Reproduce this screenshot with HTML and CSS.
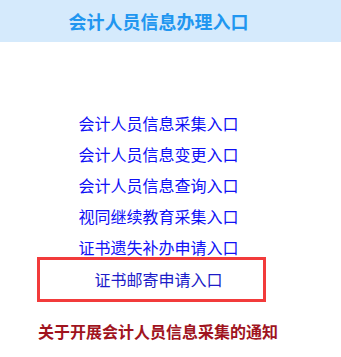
FILE: index.html
```html
<!DOCTYPE html>
<html lang="zh-CN">
<head>
<meta charset="utf-8">
<title>会计人员信息办理入口</title>
<link rel="stylesheet" href="styles.css">
</head>
<body>
<div class="header"><div class="title">会计人员信息办理入口</div></div>
<div class="links">
  <a class="link" href="#">会计人员信息采集入口</a>
  <a class="link" href="#">会计人员信息变更入口</a>
  <a class="link" href="#">会计人员信息查询入口</a>
  <a class="link" href="#">视同继续教育采集入口</a>
  <a class="link" href="#">证书遗失补办申请入口</a>
  <a class="link boxed" href="#">证书邮寄申请入口</a>
</div>
<div class="notice">关于开展会计人员信息采集的通知</div>
</body>
</html>
```
FILE: styles.css
```css
html, body {
  margin: 0;
  padding: 0;
  background: #ffffff;
  font-family: "Noto Sans CJK SC", "Noto Sans", sans-serif;
}
.header {
  height: 42px;
  background: #d5eafc;
}
.title {
  width: 317px;
  text-align: center;
  line-height: 42px;
  font-size: 18px;
  font-weight: bold;
  color: #2196f0;
}
.links {
  width: 317px;
  display: flex;
  flex-direction: column;
  gap: 11px;
  padding-top: 71px;
}
.link {
  display: block;
  text-align: center;
  font-size: 16px;
  line-height: 20px;
  color: #1010f5;
  text-decoration: none;
}
.boxed {
  margin-top: -11px;
  margin-left: 37px;
  width: 229px;
  height: 45px;
  box-sizing: border-box;
  border: 3px solid #f23b3b;
  padding-left: 14px;
  line-height: 39px;
  color: #1c1cc8;
}
.notice {
  margin-top: 19px;
  padding-left: 38px;
  font-size: 16px;
  line-height: 20px;
  font-weight: bold;
  color: #a0141e;
}
```
